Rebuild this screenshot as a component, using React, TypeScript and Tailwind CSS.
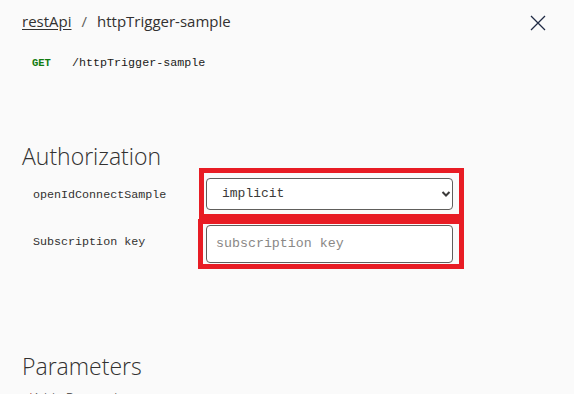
import React from "react";

const mono = { fontFamily: '"Liberation Mono", "DejaVu Sans Mono", monospace' };

const App = () => {
  return (
    <div className="w-[574px] h-[394px] overflow-hidden bg-[#fafafa] text-[#323130] font-['Open_Sans',sans-serif]">
      <div className="flex items-start justify-between pl-[22px] pr-[28px] pt-[10px]">
        <div className="flex items-center text-[15px] leading-[22px]">
          <span className="underline underline-offset-2">restApi</span>
          <span className="ml-[10px] mr-[10px] text-[#605e5c]">/</span>
          <span>httpTrigger-sample</span>
        </div>
        <svg width="16" height="16" viewBox="0 0 16 16" className="mt-[5px]">
          <path d="M1 1 L15 15 M15 1 L1 15" stroke="#1f2a44" strokeWidth="1.3" />
        </svg>
      </div>

      <div className="flex items-center pl-[32px] mt-[23px]">
        <span className="text-[10.5px] font-bold text-[#107c10] w-[40px]" style={mono}>
          GET
        </span>
        <span className="text-[11.7px] text-[#1b1a19]" style={mono}>
          /httpTrigger-sample
        </span>
      </div>

      <div className="pl-[22px] mt-[71px]">
        <h2 className="text-[23px] leading-[24px] font-light">Authorization</h2>
        <div className="flex flex-col">
          <div className="flex">
            <label className="w-[177px] pl-[11px] pt-[19px] text-[11.7px]" style={mono}>
              openIdConnectSample
            </label>
            <div className="w-[265px] h-[51px] border-[5px] border-[#e81c24] pl-[2px] pt-[5px]">
              <div className="relative w-[247px] h-[32px]">
                <select
                  defaultValue="implicit"
                  className="appearance-none w-full h-full rounded-[4px] border border-[#605e5c] bg-white pl-[15px] text-[13px] font-normal text-[#3b3a39]"
                  style={mono}
                >
                  <option value="implicit">implicit</option>
                </select>
                <svg width="10" height="8" viewBox="0 0 10 8" className="absolute right-[2px] top-[12px] pointer-events-none">
                  <path d="M1.5 2 L5 5.5 L8.5 2" stroke="#3b3a39" strokeWidth="2" fill="none" />
                </svg>
              </div>
            </div>
          </div>
          <div className="flex">
            <label className="w-[176px] pl-[11px] pt-[15px] text-[11.7px]" style={mono}>
              Subscription key
            </label>
            <div className="w-[266px] h-[50px] border-[5px] border-[#e81c24] pl-[3px] pt-[1px]">
              <input
                placeholder="subscription key"
                className="w-[247px] h-[38px] rounded-[4px] border border-[#605e5c] bg-white pl-[9px] text-[13.3px] placeholder:text-[#8a8886] outline-none"
                style={mono}
              />
            </div>
          </div>
        </div>

        <h2 className="text-[23px] leading-[24px] font-light mt-[85px]">Parameters</h2>
        <div className="mt-[13px] pl-[5px] text-[13px] leading-[16px] text-[#605e5c]" style={mono}>
          <span className="text-[#a4262c]">*</span>httpRequest param
        </div>
      </div>
    </div>
  );
};

export default App;
